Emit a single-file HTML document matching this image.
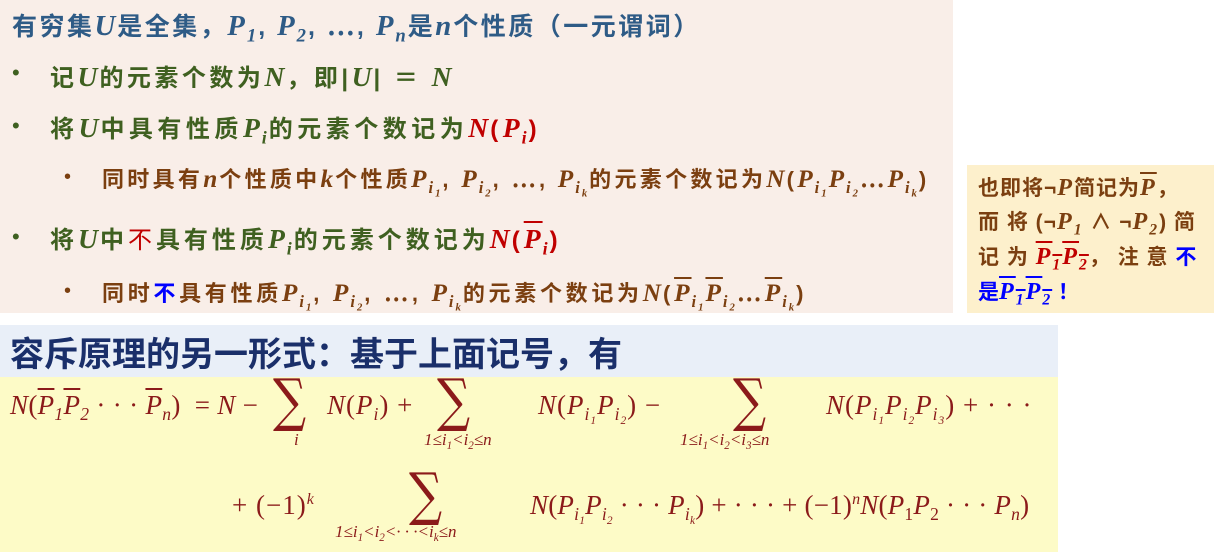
<!DOCTYPE html>
<html><head><meta charset="utf-8"><style>
body{margin:0;width:1214px;height:552px;background:#fff;position:relative;overflow:hidden;font-family:"Liberation Sans","Noto Sans CJK SC",sans-serif}
.a{position:absolute;white-space:nowrap}
.m{font-family:"Liberation Serif",serif;font-style:italic;font-weight:bold;font-size:1.15em;letter-spacing:2px}
sub{font-size:65%;vertical-align:-0.35em;line-height:0}
.ov{text-decoration:overline}
.g{color:#3f6020}.b{color:#7b3f10}.r{color:#c00000}.bl{color:#0000ff}
.f{font-family:"Liberation Serif",serif;color:#8b1a1a;font-size:27px;letter-spacing:1px}
.f i{font-style:italic}
.s{font-size:58px;font-family:"DejaVu Serif",serif;transform:scaleX(0.8);transform-origin:left;letter-spacing:0}
.lim{font-family:"Liberation Serif",serif;font-style:italic;font-size:17px;color:#8b1a1a}
.rb{font-size:21px;font-weight:bold;line-height:26px}
</style></head><body>
<div class="a" style="left:0;top:0;width:953px;height:313px;background:#f9eee8"></div>
<div class="a" style="left:967px;top:165px;width:247px;height:148px;background:#fdf0cc"></div>
<div class="a" style="left:0;top:325px;width:1058px;height:52px;background:#e9eff8"></div>
<div class="a" style="left:0;top:377px;width:1058px;height:175px;background:#fdfbc7"></div>

<div class="a" style="left:12px;top:7px;font-size:25px;font-weight:bold;color:#2e5b86;letter-spacing:2.5px">有穷集<span class="m">U</span>是全集，<span class="m">P<sub>1</sub></span>, <span class="m">P<sub>2</sub></span>, ⋯, <span class="m">P<sub>n</sub></span>是<span class="m">n</span>个性质（一元谓词）</div>

<div class="a g" style="left:12px;top:60px;font-size:22px">•</div>
<div class="a g" style="left:50px;top:58px;font-size:24px;font-weight:bold;letter-spacing:3.5px">记<span class="m">U</span>的元素个数为<span class="m">N</span>，即|<span class="m">U</span>| ＝ <span class="m">N</span></div>

<div class="a g" style="left:12px;top:113px;font-size:22px">•</div>
<div class="a g" style="left:50px;top:109px;font-size:24px;font-weight:bold;letter-spacing:4.5px">将<span class="m">U</span>中具有性质<span class="m">P<sub>i</sub></span>的元素个数记为<span class="r"><span class="m">N</span>(<span class="m">P<sub>i</sub></span>)</span></div>

<div class="a b" style="left:64px;top:166px;font-size:20px">•</div>
<div class="a b" style="left:102px;top:162px;font-size:22px;font-weight:bold;letter-spacing:3.3px">同时具有<span class="m">n</span>个性质中<span class="m">k</span>个性质<span class="m">P<sub>i<sub>1</sub></sub></span>, <span class="m">P<sub>i<sub>2</sub></sub></span>, ⋯, <span class="m">P<sub>i<sub>k</sub></sub></span>的元素个数记为<span class="m">N</span>(<span class="m">P<sub>i<sub>1</sub></sub>P<sub>i<sub>2</sub></sub></span>⋯<span class="m">P<sub>i<sub>k</sub></sub></span>)</div>

<div class="a g" style="left:12px;top:224px;font-size:22px">•</div>
<div class="a g" style="left:50px;top:220px;font-size:24px;font-weight:bold;letter-spacing:4px">将<span class="m">U</span>中<span class="r" style="font-weight:normal">不</span>具有性质<span class="m">P<sub>i</sub></span>的元素个数记为<span class="r"><span class="m">N</span>(<span class="m"><span class="ov">P</span><sub>i</sub></span>)</span></div>

<div class="a b" style="left:64px;top:280px;font-size:20px">•</div>
<div class="a b" style="left:102px;top:276px;font-size:22px;font-weight:bold;letter-spacing:3.7px">同时<span class="bl">不</span>具有性质<span class="m">P<sub>i<sub>1</sub></sub></span>, <span class="m">P<sub>i<sub>2</sub></sub></span>, ⋯, <span class="m">P<sub>i<sub>k</sub></sub></span>的元素个数记为<span class="m">N</span>(<span class="m"><span class="ov">P</span><sub>i<sub>1</sub></sub><span class="ov">P</span><sub>i<sub>2</sub></sub></span>⋯<span class="m"><span class="ov">P</span><sub>i<sub>k</sub></sub></span>)</div>

<div class="a b rb" style="left:978px;top:175px;letter-spacing:1px">也即将¬<span class="m">P</span>简记为<span class="m ov">P</span>，</div>
<div class="a b rb" style="left:978px;top:209px;letter-spacing:1px">而 将 (¬<span class="m">P<sub>1</sub></span> ∧ ¬<span class="m">P<sub>2</sub></span>) 简</div>
<div class="a b rb" style="left:978px;top:244px;letter-spacing:1px">记 为 <span class="r m"><span class="ov">P<sub>1</sub></span><span class="ov">P<sub>2</sub></span></span>， 注 意 <span class="bl">不</span></div>
<div class="a bl rb" style="left:978px;top:279px">是<span class="m ov">P<sub>1</sub>P<sub>2</sub></span> ！</div>

<div class="a" style="left:10px;top:327px;font-size:34px;font-weight:bold;color:#1a2f6a">容斥原理的另一形式：基于上面记号，有</div>

<div class="a f" style="left:10px;top:390px;letter-spacing:0.3px"><i>N</i>(<i><span class="ov">P</span><sub>1</sub><span class="ov">P</span><sub>2</sub></i> · · · <i><span class="ov">P</span><sub>n</sub></i>) &nbsp;= <i>N</i> −</div>
<div class="a f s" style="left:273px;top:366px">∑</div>
<div class="a lim" style="left:294px;top:430px">i</div>
<div class="a f" style="left:327px;top:390px"><i>N</i>(<i>P<sub>i</sub></i>) +</div>
<div class="a f s" style="left:437px;top:366px">∑</div>
<div class="a lim" style="left:424px;top:430px">1≤i<sub>1</sub>&lt;i<sub>2</sub>≤n</div>
<div class="a f" style="left:538px;top:390px"><i>N</i>(<i>P<sub>i<sub>1</sub></sub>P<sub>i<sub>2</sub></sub></i>) −</div>
<div class="a f s" style="left:733px;top:366px">∑</div>
<div class="a lim" style="left:680px;top:430px">1≤i<sub>1</sub>&lt;i<sub>2</sub>&lt;i<sub>3</sub>≤n</div>
<div class="a f" style="left:826px;top:390px"><i>N</i>(<i>P<sub>i<sub>1</sub></sub>P<sub>i<sub>2</sub></sub>P<sub>i<sub>3</sub></sub></i>) + · · ·</div>

<div class="a f" style="left:232px;top:484px">+ (−1)<sup><i style="font-size:16px">k</i></sup></div>
<div class="a f s" style="left:409px;top:460px">∑</div>
<div class="a lim" style="left:335px;top:522px">1≤i<sub>1</sub>&lt;i<sub>2</sub>&lt;· · ·&lt;i<sub>k</sub>≤n</div>
<div class="a f" style="left:530px;top:484px;letter-spacing:0.2px"><i>N</i>(<i>P<sub>i<sub>1</sub></sub>P<sub>i<sub>2</sub></sub></i> · · · <i>P<sub>i<sub>k</sub></sub></i>) + · · · + (−1)<sup><i style="font-size:16px">n</i></sup><i>N</i>(<i>P</i><sub>1</sub><i>P</i><sub>2</sub> · · · <i>P<sub>n</sub></i>)</div>
</body></html>
